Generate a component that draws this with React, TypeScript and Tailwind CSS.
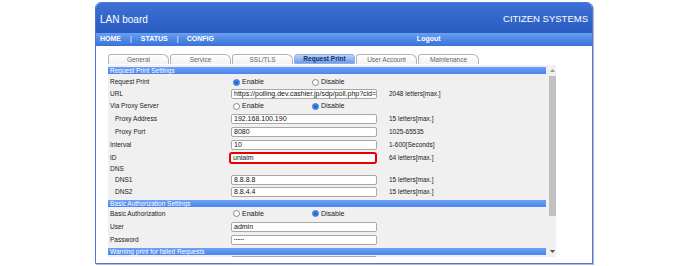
import React from "react";

const Radio = ({ checked }: { checked?: boolean }) =>
  checked ? (
    <span className="w-[7px] h-[7px] rounded-full border border-[#2f74d6] bg-[radial-gradient(circle_at_50%_45%,#9cc6ff_0%,#3b86ea_55%,#2a6fd2_100%)] flex items-center justify-center shrink-0">
      <span className="w-[3px] h-[3px] rounded-full bg-[#1f63c8]" />
    </span>
  ) : (
    <span className="w-[7px] h-[7px] rounded-full border border-[#8a8a8a] bg-white shrink-0" />
  );

const RadioPair = ({ enable }: { enable: boolean }) => (
  <div className="flex items-center pl-[2px] text-[7px] text-[#222]">
    <div className="flex items-center w-[79px] gap-[2px]">
      <Radio checked={enable} />
      <span className="mt-[1px]">Enable</span>
    </div>
    <div className="flex items-center gap-[2px]">
      <Radio checked={!enable} />
      <span className="mt-[1px]">Disable</span>
    </div>
  </div>
);

const Field = ({ value, red }: { value: string; red?: boolean }) =>
  red ? (
    <div className="-ml-[2px] w-[150px] h-[12px] border-2 border-[#e60000] rounded-[3px] bg-white text-[7px] leading-[8px] pl-[2px] text-[#111] whitespace-nowrap overflow-hidden">
      {value}
    </div>
  ) : (
    <div className="w-[146px] h-[10px] border border-[#a8a8a8] rounded-[2px] bg-white text-[7px] leading-[8px] pl-[2px] text-[#111] whitespace-nowrap overflow-hidden">
      {value}
    </div>
  );

const Row = ({
  label,
  indent,
  h,
  children,
  hint,
}: {
  label: string;
  indent?: boolean;
  h: string;
  children?: React.ReactNode;
  hint?: string;
}) => (
  <div className={`flex items-center shrink-0 ${h}`}>
    <div className={`w-[123px] shrink-0 text-[6.5px] text-[#1a1a1a] whitespace-nowrap ${indent ? "pl-[7px]" : "pl-[2px]"}`}>{label}</div>
    <div className="w-[146px] shrink-0 flex items-center">{children}</div>
    {hint && <div className="ml-[12px] text-[6.5px] text-[#1a1a1a] whitespace-nowrap">{hint}</div>}
  </div>
);

const SectionHeader = ({ text, mt }: { text: string; mt: string }) => (
  <div className={`w-[438px] h-[7px] shrink-0 ${mt} bg-gradient-to-b from-[#6ea0f5] to-[#4a84ee] text-white text-[6.5px] leading-[7px] pl-[2px] whitespace-nowrap`}>
    {text}
  </div>
);

const tabs = ["General", "Service", "SSL/TLS", "Request Print", "User Account", "Maintenance"];

export default function App() {
  return (
    <div className="w-[688px] h-[266px] bg-white overflow-hidden pl-[95px] pt-[2px] font-['Liberation_Sans',Arial,sans-serif]">
      <div className="w-[498px] h-[262px] border border-[#4a78e0] rounded-t-[6px] shadow-[1px_1px_0_#b8bcc8] bg-white flex flex-col overflow-hidden">
        {/* Title bar */}
        <div className="h-[30px] shrink-0 bg-gradient-to-b from-[#3d70d3] to-[#2a5cc1] flex items-center justify-between pl-[4px] pr-[4px] pt-[3px] text-white">
          <span className="text-[10px]">LAN board</span>
          <span className="text-[9.5px]">CITIZEN SYSTEMS</span>
        </div>
        {/* Nav */}
        <div className="h-[13px] shrink-0 bg-gradient-to-b from-[#6aa0f0] via-[#4d87e6] to-[#3a72d6] flex items-center pl-[4px] text-white font-bold text-[7px]">
          <span>HOME</span>
          <span className="ml-[9px] font-normal">|</span>
          <span className="ml-[9px]">STATUS</span>
          <span className="ml-[9px] font-normal">|</span>
          <span className="ml-[8px]">CONFIG</span>
          <span className="ml-[203px]">Logout</span>
        </div>
        {/* Content */}
        <div className="flex-1 flex flex-col pl-[12px] pt-[8px]">
          <div className="flex h-[10px] items-end shrink-0">
            {tabs.map((t, i) =>
              t === "Request Print" ? (
                <div
                  key={t}
                  className="w-[61px] ml-[1px] h-[10px] rounded-t-[3px] border border-[#8fb0e6] bg-gradient-to-b from-[#b9d3fb] to-[#6c9cec] text-[6.5px] font-bold text-[#1c2d5a] flex items-center justify-center"
                >
                  {t}
                </div>
              ) : (
                <div
                  key={t}
                  className={`w-[61px] ${i === 0 ? "ml-[0px]" : "ml-[1px]"} h-[10px] rounded-t-[3px] rounded-tr-[6px] border border-b-0 border-[#b4b4b4] bg-gradient-to-b from-white to-[#f1f1f1] text-[6.5px] text-[#666] flex items-center justify-center`}
                >
                  {t}
                </div>
              )
            )}
          </div>
          <div className="mt-[1px] w-[448px] h-[192px] shrink-0 bg-[#f0f0f0] flex overflow-hidden">
            <div className="w-[440px] pt-[2px] flex flex-col overflow-hidden">
              <SectionHeader text="Request Print Settings" mt="mt-0" />
              <div className="h-[2px] shrink-0" />
              <Row label="Request Print" h="h-[12px]">
                <RadioPair enable={true} />
              </Row>
              <Row label="URL" h="h-[12px]" hint="2048 letters[max.]">
                <Field value="https://polling.dev.cashier.jp/sdp/poll.php?cid=!" />
              </Row>
              <Row label="Via Proxy Server" h="h-[12px]">
                <RadioPair enable={false} />
              </Row>
              <Row label="Proxy Address" indent h="h-[13px]" hint="15 letters[max.]">
                <Field value="192.168.100.190" />
              </Row>
              <Row label="Proxy Port" indent h="h-[13px]" hint="1025-65535">
                <Field value="8080" />
              </Row>
              <Row label="Interval" h="h-[13px]" hint="1-600[Seconds]">
                <Field value="10" />
              </Row>
              <Row label="ID" h="h-[13px]" hint="64 letters[max.]">
                <Field value="uniaim" red />
              </Row>
              <Row label="DNS" h="h-[10px]" />
              <Row label="DNS1" indent h="h-[12px]" hint="15 letters[max.]">
                <Field value="8.8.8.8" />
              </Row>
              <Row label="DNS2" indent h="h-[12px]" hint="15 letters[max.]">
                <Field value="8.8.4.4" />
              </Row>
              <SectionHeader text="Basic Authorization Settings" mt="mt-[2px]" />
              <Row label="Basic Authorization" h="h-[13px]">
                <RadioPair enable={false} />
              </Row>
              <Row label="User" h="h-[13px]">
                <Field value="admin" />
              </Row>
              <Row label="Password" h="h-[13px]">
                <div className="w-[146px] h-[10px] border border-[#a8a8a8] rounded-[2px] bg-white text-[4px] leading-[8px] pl-[2px] text-[#222] tracking-[0.3px]">
                  ••••••
                </div>
              </Row>
              <SectionHeader text="Warning print for failed Requests" mt="mt-[2px]" />
              <div className="flex h-[8px] pt-[1px] shrink-0">
                <div className="w-[123px] shrink-0" />
                <div className="w-[146px] h-[10px] border border-[#a8a8a8] rounded-[2px] bg-white" />
              </div>
            </div>
            {/* Scrollbar */}
            <div className="w-[8px] flex flex-col items-center bg-[#f0f0f0]">
              <div className="h-[9px] flex items-center justify-center pt-[2px]">
                <svg width="5" height="3" viewBox="0 0 5 3">
                  <polygon points="2.5,0 5,3 0,3" fill="#9a9a9a" />
                </svg>
              </div>
              <div className="w-[7px] h-[140px] mt-[2px] bg-[#c1c1c1]" />
              <div className="flex-1" />
              <div className="h-[9px] flex items-center justify-center pb-[3px]">
                <svg width="5" height="3" viewBox="0 0 5 3">
                  <polygon points="0,0 5,0 2.5,3" fill="#505050" />
                </svg>
              </div>
            </div>
          </div>
        </div>
      </div>
    </div>
  );
}
